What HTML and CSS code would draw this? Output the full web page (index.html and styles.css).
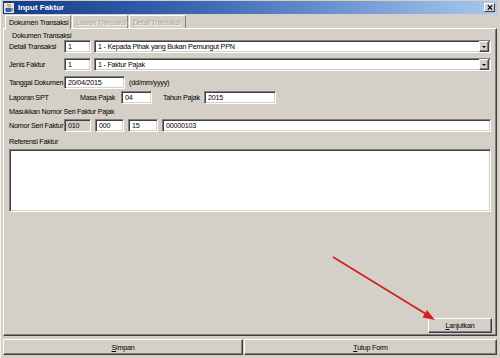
FILE: index.html
```html
<!DOCTYPE html>
<html>
<head>
<meta charset="utf-8">
<title>Input Faktur</title>
<link rel="stylesheet" href="styles.css">
</head>
<body>
<div class="window">
  <div class="titlebar">
    <svg class="app-icon" width="10" height="10" viewBox="0 0 10 10">
      <rect x="0" y="0" width="10" height="10" fill="#e8e4dc"/>
      <path d="M4 1 C3 2.5 5 3 4 4.5 M6 1 C5 2.5 7 3 6 4.5" stroke="#e06010" stroke-width="1" fill="none"/>
      <path d="M1.5 5 H7.5 V7.5 Q7.5 9 6 9 H3 Q1.5 9 1.5 7.5 Z" fill="#3060b0"/>
      <path d="M7.5 5.5 Q9.5 5.5 9 7 Q8.6 7.8 7.4 7.6" stroke="#3060b0" stroke-width="0.8" fill="none"/>
    </svg>
    <span class="title-text">Input Faktur</span>
    <span class="close-btn">
      <svg width="8" height="7" viewBox="0 0 8 7"><path d="M1 0.5 L7 6.5 M7 0.5 L1 6.5" stroke="#000" stroke-width="1.6"/></svg>
    </span>
  </div>
  <div class="tabs">
    <div class="tab tab-active">Dokumen Transaksi</div>
    <div class="tab tab-disabled">Lawan Transaksi</div>
    <div class="tab tab-disabled">Detail Transaksi</div>
  </div>
  <div class="panel">
    <div class="group-title">Dokumen Transaksi</div>
    <div class="row row-1">
      <span class="label">Detail Transaksi</span>
      <span class="field w-code">1</span>
      <span class="combo"><span class="combo-text">1 - Kepada Pihak yang Bukan Pemungut PPN</span><span class="combo-btn"><span class="tri"></span></span></span>
    </div>
    <div class="row row-2">
      <span class="label">Jenis Faktur</span>
      <span class="field w-code">1</span>
      <span class="combo"><span class="combo-text">1 - Faktur Pajak</span><span class="combo-btn"><span class="tri"></span></span></span>
    </div>
    <div class="row row-3">
      <span class="label">Tanggal Dokumen</span>
      <span class="field w-date">20/04/2015</span>
      <span class="hint">(dd/mm/yyyy)</span>
    </div>
    <div class="row row-4">
      <span class="label">Laporan SPT</span>
      <span class="sub-label masa">Masa Pajak</span>
      <span class="field w-masa">04</span>
      <span class="sub-label tahun">Tahun Pajak</span>
      <span class="field w-tahun">2015</span>
    </div>
    <div class="row row-5">
      <span class="label-wide">Masukkan Nomor Seri Faktur Pajak</span>
    </div>
    <div class="row row-6">
      <span class="label">Nomor Seri Faktur</span>
      <span class="field w-code field-disabled">010</span>
      <span class="field w-seri1">000</span>
      <span class="field w-seri2">15</span>
      <span class="field grow">00000103</span>
    </div>
    <div class="row row-7">
      <span class="label-wide">Referensi Faktur</span>
    </div>
    <div class="textarea"></div>
    <div class="spacer"></div>
    <div class="actions">
      <span class="button btn-next"><u>L</u>anjutkan</span>
    </div>
  </div>
  <div class="footer">
    <span class="button"><u>S</u>impan</span>
    <span class="button"><u>T</u>utup Form</span>
  </div>
  <svg class="arrow" width="500" height="358" viewBox="0 0 500 358">
    <line x1="332" y1="257" x2="425" y2="314" stroke="#cc2020" stroke-width="1.6"/>
    <polygon points="434,320 421.5,317.5 426,310" fill="#d42020"/>
  </svg>
</div>
</body>
</html>
```

FILE: styles.css
```css
html, body {
  margin: 0;
  padding: 0;
}
body {
  width: 500px;
  height: 358px;
  overflow: hidden;
  background: #d4d0c8;
}
.window {
  position: relative;
  width: 500px;
  height: 358px;
  box-sizing: border-box;
  padding: 1px 3px 3px 2px;
  background: #d4d0c8;
  border-left: 1px solid #f4f2ee;
  display: flex;
  flex-direction: column;
  font-family: "Liberation Sans", Arial, sans-serif;
  font-size: 7.2px;
  letter-spacing: -0.25px;
  color: #000;
}
.titlebar {
  height: 13px;
  flex: none;
  display: flex;
  align-items: center;
  background: linear-gradient(to right, #143a88 0%, #3c68b4 40%, #a8c8f0 100%);
  padding: 0 2px 0 1px;
}
.app-icon {
  flex: none;
  margin-right: 4px;
}
.title-text {
  color: #fff;
  font-weight: bold;
  font-size: 8px;
  letter-spacing: 0;
  flex: 1;
}
.close-btn {
  width: 11px;
  height: 9px;
  box-sizing: border-box;
  background: #d4d0c8;
  border: 1px solid;
  border-color: #fff #404040 #404040 #fff;
  display: flex;
  align-items: center;
  justify-content: center;
}
.close-btn svg {
  width: 6px;
  height: 5px;
}
.tabs {
  height: 14px;
  flex: none;
  display: flex;
  align-items: flex-end;
  padding-left: 2px;
}
.tab {
  height: 13px;
  box-sizing: border-box;
  display: flex;
  align-items: center;
  padding: 0 3px;
  white-space: nowrap;
  border-top: 1px solid #fff;
  border-left: 1px solid #fff;
  border-right: 1px solid #808080;
}
.tab-active {
  height: 14px;
  background: #d4d0c8;
  margin-bottom: -1px;
  position: relative;
  z-index: 1;
  width: 66px;
}
.tab-disabled {
  color: #a9a59d;
  text-shadow: 1px 1px 0 #fff;
  margin-left: 1px;
}
.tab-disabled:nth-child(2) { width: 56px; }
.tab-disabled:nth-child(3) { width: 57px; }
.panel {
  flex: 1;
  min-height: 0;
  display: flex;
  flex-direction: column;
  border: 1px solid;
  border-color: #fff #404040 #404040 #fff;
  box-shadow: inset -1px -1px 0 #808080;
  padding: 0 5px 2px 3px;
}
.group-title {
  height: 9px;
  line-height: 9px;
  margin-top: 2px;
  padding-left: 5px;
}
.row {
  display: flex;
  align-items: center;
  height: 13px;
  flex: none;
}
.row-1 { margin-top: 0; }
.row-2 { margin-top: 5px; }
.row-3 { margin-top: 5px; }
.row-4 { margin-top: 2px; }
.row-5 { margin-top: 1px; height: 12px; }
.row-6 { margin-top: 2px; }
.row-7 { margin-top: 3px; height: 12px; }
.label {
  width: 57px;
  flex: none;
  white-space: nowrap;
  box-sizing: border-box;
}
.label-wide {
  white-space: nowrap;
}
.row .label, .row .label-wide { padding-left: 2px; }
.field {
  height: 13px;
  box-sizing: border-box;
  background: #fff;
  border: 1px solid;
  border-color: #808080 #fff #fff #808080;
  box-shadow: inset 1px 1px 0 #404040, inset -1px -1px 0 #d4d0c8;
  padding: 0 2px 0 3px;
  display: flex;
  align-items: center;
  white-space: nowrap;
  overflow: hidden;
  flex: none;
}
.field-disabled {
  background: #d4d0c8;
}
.w-code { width: 27px; }
.w-date { width: 61px; }
.w-masa { width: 31px; }
.w-tahun { width: 72px; }
.w-seri1 { width: 29px; margin-left: 4px; }
.w-seri2 { width: 30px; margin-left: 4px; }
.grow { flex: 1; margin-left: 4px; }
.hint { margin-left: 4px; }
.sub-label {
  flex: none;
  white-space: nowrap;
}
.masa { margin-left: 16px; width: 41px; }
.tahun { margin-left: 11px; width: 41px; }
.combo {
  flex: 1;
  margin-left: 3px;
  height: 13px;
  box-sizing: border-box;
  background: #fff;
  border: 1px solid;
  border-color: #808080 #fff #fff #808080;
  box-shadow: inset 1px 1px 0 #404040, inset -1px -1px 0 #d4d0c8;
  display: flex;
  align-items: center;
  padding: 1px 1px 1px 3px;
}
.combo-text {
  flex: 1;
  white-space: nowrap;
}
.combo-btn {
  width: 10px;
  height: 11px;
  box-sizing: border-box;
  background: #d4d0c8;
  border: 1px solid;
  border-color: #fff #404040 #404040 #fff;
  box-shadow: inset -1px -1px 0 #808080;
  display: flex;
  align-items: center;
  justify-content: center;
}
.tri {
  width: 0;
  height: 0;
  border-left: 2px solid transparent;
  border-right: 2px solid transparent;
  border-top: 2px solid #000;
}
.textarea {
  height: 63px;
  flex: none;
  margin-top: 2px;
  margin-left: 2px;
  box-sizing: border-box;
  background: #fff;
  border: 1px solid;
  border-color: #808080 #fff #fff #808080;
  box-shadow: inset 1px 1px 0 #404040, inset -1px -1px 0 #d4d0c8;
}
.spacer { flex: 1; }
.actions {
  display: flex;
  justify-content: flex-end;
  margin-right: -1px;
}
.button {
  height: 15px;
  box-sizing: border-box;
  display: flex;
  align-items: center;
  justify-content: center;
  background: #d4d0c8;
  border: 1px solid;
  border-color: #fff #404040 #404040 #fff;
  box-shadow: inset -1px -1px 0 #808080;
  white-space: nowrap;
}
.btn-next {
  width: 64px;
}
.footer {
  flex: none;
  display: grid;
  grid-template-columns: 240px 1fr;
  gap: 1px;
  margin-top: 3px;
  height: 16px;
}
.footer .button {
  height: 16px;
}
.arrow {
  position: absolute;
  left: 0;
  top: 0;
  pointer-events: none;
}
```
